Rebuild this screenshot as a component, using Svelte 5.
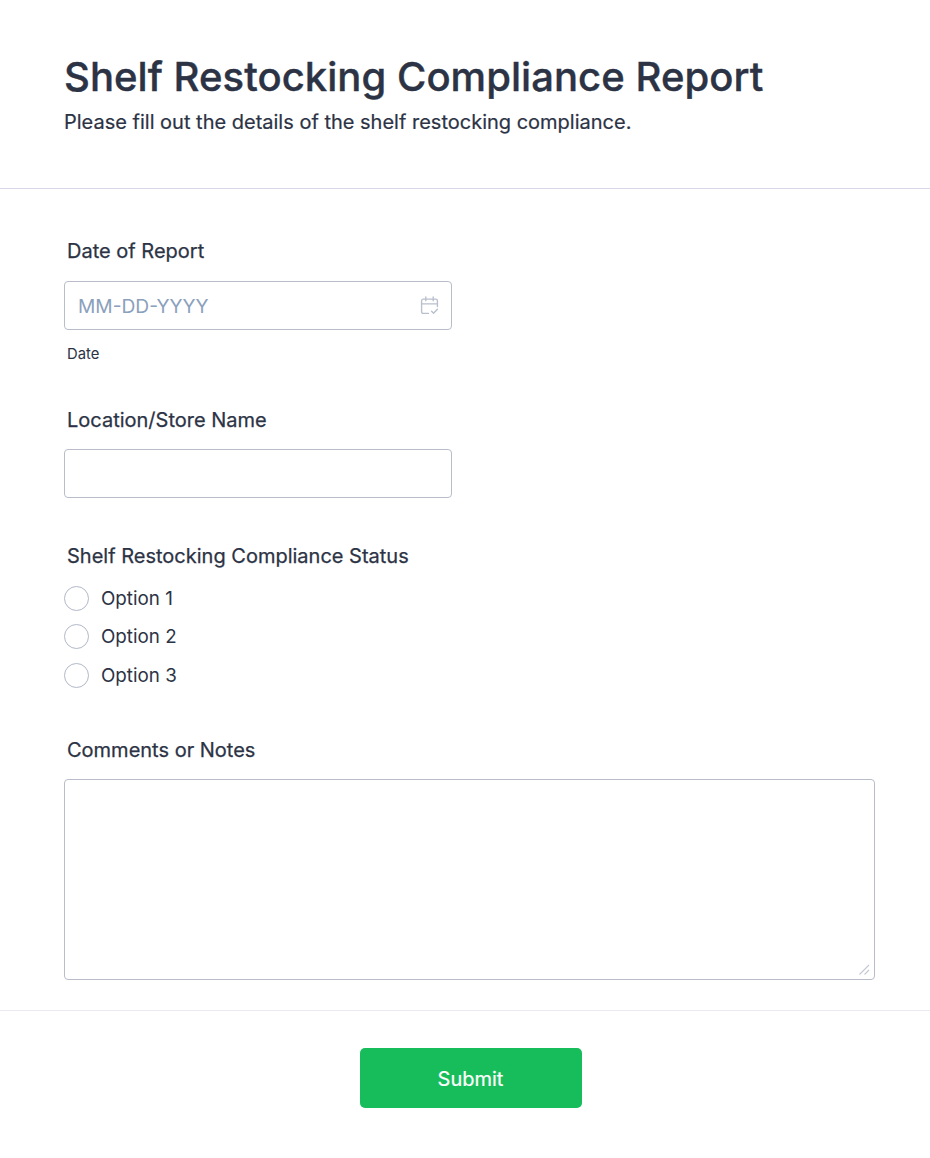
<script>
  const options = ['Option 1', 'Option 2', 'Option 3'];
</script>

<div class="form">
  <header class="form-header">
    <h1>Shelf Restocking Compliance Report</h1>
    <p>Please fill out the details of the shelf restocking compliance.</p>
  </header>

  <div class="fields">
    <div class="field date-field">
      <label for="date">Date of Report</label>
      <div class="input-wrap">
        <input id="date" type="text" placeholder="MM-DD-YYYY" />
        <svg class="cal" width="19" height="19" viewBox="0 0 18 18" fill="none" stroke="#b9bfcc" stroke-width="1.300" stroke-linecap="round" stroke-linejoin="round">
          <path d="M8 16.500H3A1.500 1.500 0 0 1 1.500 15V4.500A1.500 1.500 0 0 1 3 3h12A1.500 1.500 0 0 1 16.500 4.500V10" />
          <path d="M1.500 7.500h15M5.500 1v3.500M12.500 1v3.500" />
          <path d="M11 14.500l1.800 1.800L16.500 12.500" />
        </svg>
      </div>
      <span class="sub">Date</span>
    </div>

    <div class="field store-field">
      <label for="store">Location/Store Name</label>
      <input id="store" type="text" />
    </div>

    <div class="field status-field">
      <span class="label">Shelf Restocking Compliance Status</span>
      <div class="options">
        {#each options as opt}
          <label class="option">
            <span class="radio"></span>
            {opt}
          </label>
        {/each}
      </div>
    </div>

    <div class="field notes-field">
      <label for="notes">Comments or Notes</label>
      <div class="notes-wrap">
        <textarea id="notes"></textarea>
        <svg class="grip" width="11" height="11" viewBox="0 0 11 11" fill="none" stroke="#c3c8d4" stroke-width="1.100">
          <path d="M0.500 10.500L10 1M5.500 10.500L10 6" />
        </svg>
      </div>
    </div>
  </div>

  <footer class="form-footer">
    <button type="button">Submit</button>
  </footer>
</div>

<style>
  :global(body) {
    margin: 0;
    background: #fff;
  }

  .form {
    width: 930px;
    height: 1158px;
    box-sizing: border-box;
    font-family: Inter, "Liberation Sans", sans-serif;
    color: #2c3345;
    display: flex;
    flex-direction: column;
  }

  .form-header {
    height: 189px;
    box-sizing: border-box;
    padding: 52px 64px 0;
    border-bottom: 1px solid #d8d8e8;
  }

  h1 {
    margin: 0;
    font-size: 40px;
    line-height: 50px;
    font-weight: 500;
    letter-spacing: 0.05px;
    -webkit-text-stroke: 0.4px #2c3345;
  }

  .form-header p {
    margin: 6px 0 0;
    font-size: 20px;
    line-height: 28px;
    font-weight: 400;
    -webkit-text-stroke: 0.2px #2c3345;
  }

  .fields {
    padding: 48px 55px 0 64px;
    display: flex;
    flex-direction: column;
  }

  .field label:not(.option),
  .label {
    display: block;
    margin-left: 3px;
    font-size: 20px;
    line-height: 28px;
    font-weight: 400;
    -webkit-text-stroke: 0.25px #2c3345;
  }

  input {
    display: block;
    width: 388px;
    height: 49px;
    box-sizing: border-box;
    padding: 1px 13px 0;
    border: 1px solid #b8bdc9;
    border-radius: 4px;
    background: #fff;
    font: 400 19.200px Inter, sans-serif;
    color: #2c3345;
  }

  input::placeholder {
    color: #8aa0bc;
    opacity: 1;
  }

  .input-wrap {
    position: relative;
    width: 388px;
    margin-top: 16px;
  }

  .cal {
    position: absolute;
    top: 15px;
    right: 13px;
  }

  .sub {
    display: block;
    margin: 14px 0 0 3px;
    font-size: 14.800px;
    line-height: 20px;
  }

  .store-field {
    margin-top: 42px;
  }

  .store-field input {
    margin-top: 15px;
  }

  .status-field {
    margin-top: 44px;
  }

  .options {
    margin-top: 16px;
    display: flex;
    flex-direction: column;
    gap: 13.400px;
  }

  .option {
    display: flex;
    align-items: center;
    gap: 12px;
    height: 25px;
    font-size: 18.800px;
    font-weight: 400;
  }

  .radio {
    width: 25px;
    height: 25px;
    box-sizing: border-box;
    border: 1.500px solid #b2b8c8;
    border-radius: 50%;
  }

  .notes-field {
    margin-top: 48.200px;
  }

  .notes-wrap {
    position: relative;
    width: 811px;
    margin-top: 15px;
  }

  textarea {
    display: block;
    width: 811px;
    height: 201px;
    box-sizing: border-box;
    border: 1px solid #b8bdc9;
    border-radius: 4px;
    background: #fff;
    resize: none;
  }

  .grip {
    position: absolute;
    right: 5px;
    bottom: 5px;
  }

  .form-footer {
    margin-top: 30px;
    border-top: 1px solid #eaebf2;
    display: flex;
    justify-content: center;
    padding: 37px 0 0 11px;
  }

  button {
    width: 222px;
    height: 60px;
    border: none;
    border-radius: 5px;
    background: #18bd5b;
    color: #fff;
    padding: 2px 0 0;
    font: 400 20px Inter, sans-serif;
    -webkit-text-stroke: 0.2px #fff;
  }
</style>
